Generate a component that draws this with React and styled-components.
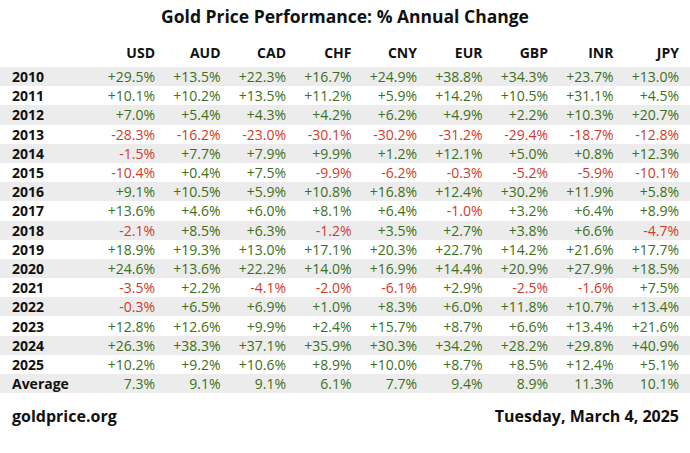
import React from "react";
import styled, { createGlobalStyle } from "styled-components";

const Global = createGlobalStyle`
  html, body { margin: 0; padding: 0; background: #fff; }
  body { font-family: "Open Sans", "Liberation Sans", sans-serif; color: #111; }
`;

const Page = styled.div`
  width: 690px;
  height: 453px;
  display: flex;
  flex-direction: column;
  background: #fff;
`;

const Title = styled.h1`
  margin: 0;
  padding-top: 4px;
  height: 38px;
  box-sizing: border-box;
  font-size: 17.5px;
  font-weight: 700;
  text-align: center;
  line-height: 24px;
  color: #111;
`;

const Table = styled.div`
  display: flex;
  flex-direction: column;
`;

const Row = styled.div`
  display: grid;
  grid-template-columns: 77.5px repeat(9, 65.5px);
  padding: 0 11px 0 12px;
  height: ${p => (p.$head ? "29px" : "19.2px")};
  align-items: ${p => (p.$head ? "start" : "center")};
  background: ${p => (p.$shade ? "#ececec" : "transparent")};
  font-size: 14px;
  line-height: 19px;
`;

const Label = styled.div`
  font-weight: 700;
  color: #111;
`;

const Head = styled.div`
  font-weight: 700;
  text-align: right;
  color: #111;
  padding-top: 5px;
`;

const Cell = styled.div`
  text-align: right;
  color: ${p => (p.$neg ? "#d03a2a" : "#3c7020")};
`;

const Footer = styled.div`
  display: flex;
  justify-content: space-between;
  align-items: center;
  padding: 0 11px 0 12px;
  margin-top: 10px;
  height: 25px;
  font-size: 16px;
  font-weight: 700;
  color: #111;
`;

const currencies = ["USD", "AUD", "CAD", "CHF", "CNY", "EUR", "GBP", "INR", "JPY"];

const data = [
  ["2010", "+29.5%", "+13.5%", "+22.3%", "+16.7%", "+24.9%", "+38.8%", "+34.3%", "+23.7%", "+13.0%"],
  ["2011", "+10.1%", "+10.2%", "+13.5%", "+11.2%", "+5.9%", "+14.2%", "+10.5%", "+31.1%", "+4.5%"],
  ["2012", "+7.0%", "+5.4%", "+4.3%", "+4.2%", "+6.2%", "+4.9%", "+2.2%", "+10.3%", "+20.7%"],
  ["2013", "-28.3%", "-16.2%", "-23.0%", "-30.1%", "-30.2%", "-31.2%", "-29.4%", "-18.7%", "-12.8%"],
  ["2014", "-1.5%", "+7.7%", "+7.9%", "+9.9%", "+1.2%", "+12.1%", "+5.0%", "+0.8%", "+12.3%"],
  ["2015", "-10.4%", "+0.4%", "+7.5%", "-9.9%", "-6.2%", "-0.3%", "-5.2%", "-5.9%", "-10.1%"],
  ["2016", "+9.1%", "+10.5%", "+5.9%", "+10.8%", "+16.8%", "+12.4%", "+30.2%", "+11.9%", "+5.8%"],
  ["2017", "+13.6%", "+4.6%", "+6.0%", "+8.1%", "+6.4%", "-1.0%", "+3.2%", "+6.4%", "+8.9%"],
  ["2018", "-2.1%", "+8.5%", "+6.3%", "-1.2%", "+3.5%", "+2.7%", "+3.8%", "+6.6%", "-4.7%"],
  ["2019", "+18.9%", "+19.3%", "+13.0%", "+17.1%", "+20.3%", "+22.7%", "+14.2%", "+21.6%", "+17.7%"],
  ["2020", "+24.6%", "+13.6%", "+22.2%", "+14.0%", "+16.9%", "+14.4%", "+20.9%", "+27.9%", "+18.5%"],
  ["2021", "-3.5%", "+2.2%", "-4.1%", "-2.0%", "-6.1%", "+2.9%", "-2.5%", "-1.6%", "+7.5%"],
  ["2022", "-0.3%", "+6.5%", "+6.9%", "+1.0%", "+8.3%", "+6.0%", "+11.8%", "+10.7%", "+13.4%"],
  ["2023", "+12.8%", "+12.6%", "+9.9%", "+2.4%", "+15.7%", "+8.7%", "+6.6%", "+13.4%", "+21.6%"],
  ["2024", "+26.3%", "+38.3%", "+37.1%", "+35.9%", "+30.3%", "+34.2%", "+28.2%", "+29.8%", "+40.9%"],
  ["2025", "+10.2%", "+9.2%", "+10.6%", "+8.9%", "+10.0%", "+8.7%", "+8.5%", "+12.4%", "+5.1%"],
  ["Average", "7.3%", "9.1%", "9.1%", "6.1%", "7.7%", "9.4%", "8.9%", "11.3%", "10.1%"],
];

export default function App() {
  return (
    <Page>
      <Global />
      <Title>Gold Price Performance: % Annual Change</Title>
      <Table>
        <Row $head>
          <Label />
          {currencies.map(c => (
            <Head key={c}>{c}</Head>
          ))}
        </Row>
        {data.map((r, i) => (
          <Row key={r[0]} $shade={i % 2 === 0}>
            <Label>{r[0]}</Label>
            {r.slice(1).map((v, j) => (
              <Cell key={j} $neg={v.startsWith("-")}>{v}</Cell>
            ))}
          </Row>
        ))}
      </Table>
      <Footer>
        <span>goldprice.org</span>
        <span>Tuesday, March 4, 2025</span>
      </Footer>
    </Page>
  );
}
